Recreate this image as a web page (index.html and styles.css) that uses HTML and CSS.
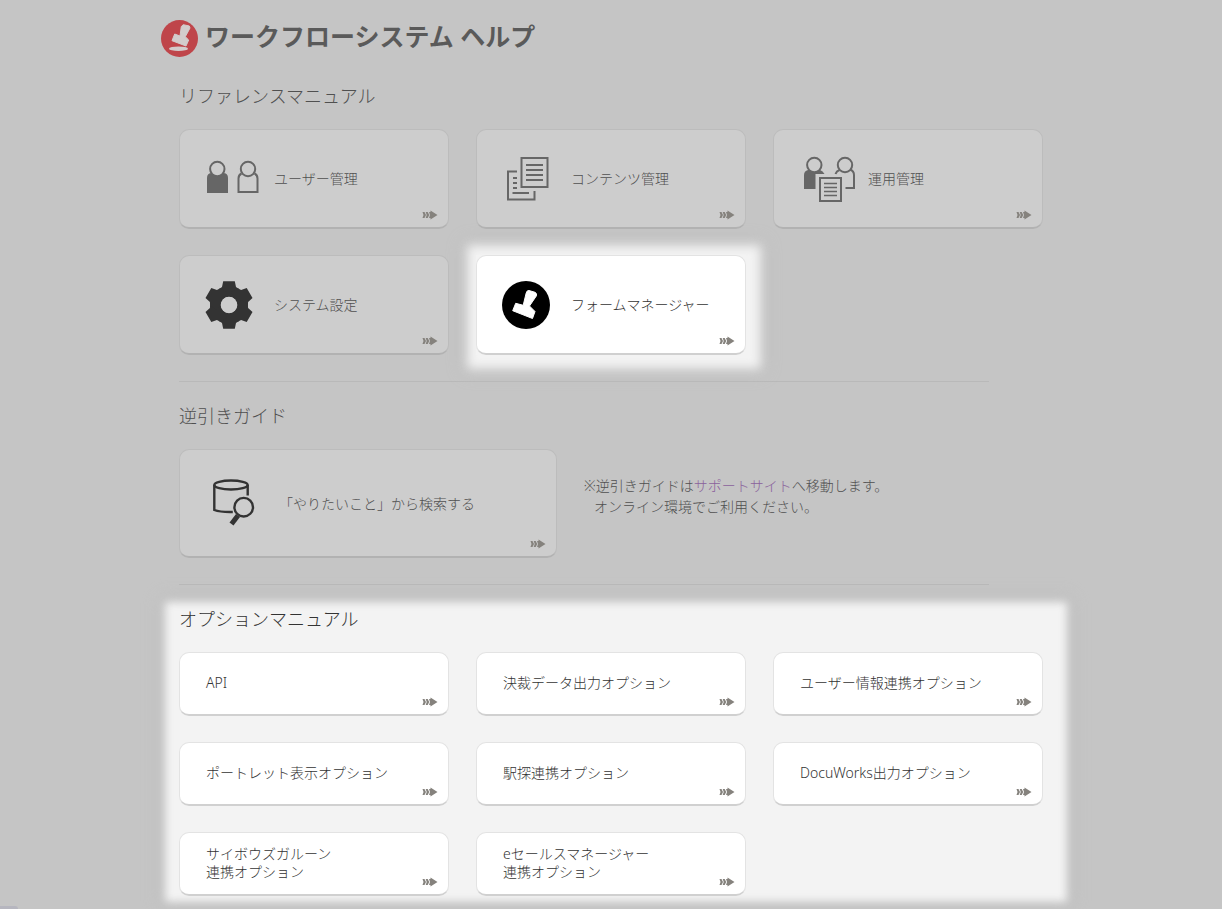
FILE: index.html
```html
<!DOCTYPE html>
<html lang="ja">
<head>
<meta charset="utf-8">
<meta name="viewport" content="width=device-width, initial-scale=1">
<title>ワークフローシステム ヘルプ</title>
<link rel="stylesheet" href="styles.css">
</head>
<body>
<svg class="defs" aria-hidden="true">
  <symbol id="arrow" viewBox="0 0 16 10">
    <path d="M0.500 2h2L4 5 2.500 8h-2l1-3zM3.700 2h2l1.500 3-1.500 3h-2l1-3zM7 2h1.500V0.500L15.500 5l-7 4.500V8H7l1-3z"/>
  </symbol>
</svg>
<main class="page">
  <header class="header">
    <svg class="logo" viewBox="0 0 37 37" aria-hidden="true">
      <circle cx="18.500" cy="18.500" r="18.500" fill="#bf454a"/>
      <path d="M20.300 6.500 22.300 4.700 28.300 6 29 8 24.300 16.700 27.700 20 25 26 11 20.700 13.700 14 19 16z" fill="#d3cccc" stroke="#d3cccc" stroke-linejoin="round"/>
      <ellipse cx="17.500" cy="28.700" rx="9.500" ry="2.300" fill="#d3cccc"/>
    </svg>
    <h1 class="title">ワークフローシステム ヘルプ</h1>
  </header>

  <section class="section">
    <h2 class="heading">リファレンスマニュアル</h2>
    <div class="grid">
      <a class="card" href="#user">
        <svg class="icon" viewBox="0 0 58 56" aria-hidden="true" fill="none" stroke="#666" stroke-width="2">
          <path d="M2 42V27q0-5 5-5h11q5 0 5 5v15z" fill="#666" stroke="none"/>
          <circle cx="12.300" cy="18" r="7.200" fill="#cdcdcd"/>
          <path d="M36.500 22.500q-3 1.500-3 5V41h19V27.500q0-3.500-3-5"/>
          <circle cx="43" cy="18" r="7.200"/>
        </svg>
        <span class="label">ユーザー管理</span>
        <svg class="arrow" aria-hidden="true"><use href="#arrow"/></svg>
      </a>
      <a class="card" href="#contents">
        <svg class="icon" viewBox="0 0 58 56" aria-hidden="true" fill="none" stroke="#666" stroke-width="2">
          <path d="M19.500 7h26v29h-26zM24 14h17M24 19h17M24 24h17M24 29h17M15 20.500H6v28h26.500V40M10.500 42H27M11 27h4M11 32h4M11 37h4"/>
        </svg>
        <span class="label">コンテンツ管理</span>
        <svg class="arrow" aria-hidden="true"><use href="#arrow"/></svg>
      </a>
      <a class="card" href="#operation">
        <svg class="icon" viewBox="0 0 58 56" aria-hidden="true" fill="none" stroke="#666" stroke-width="2">
          <path d="M5 38V24q0-4 4-5h12q3 1 4.500 4h-9v15z" fill="#666" stroke="none"/>
          <circle cx="15.300" cy="14" r="7.200" fill="#cdcdcd"/>
          <circle cx="46" cy="14" r="7.200"/>
          <path d="M36.500 23q1-3 4-4M51 18.500q4 1.500 4 5.500v13h-8.500M21 27h21v23H21z"/>
          <path d="M25 32.500h13M25 36.500h13M25 40.500h13M25 44.500h13" stroke-width="1.500"/>
        </svg>
        <span class="label">運用管理</span>
        <svg class="arrow" aria-hidden="true"><use href="#arrow"/></svg>
      </a>
      <a class="card" href="#system">
        <svg class="icon" viewBox="0 0 58 56" aria-hidden="true">
          <defs><path id="tooth" d="M-5.800-23.800H5.800L7-18 10-16V-8h-20v-8l3-2z"/></defs>
          <g fill="#333" transform="translate(24 28)">
            <circle r="13" fill="none" stroke="#333" stroke-width="10"/>
            <use href="#tooth"/>
            <use href="#tooth" transform="rotate(60)"/>
            <use href="#tooth" transform="rotate(120)"/>
            <use href="#tooth" transform="rotate(180)"/>
            <use href="#tooth" transform="rotate(240)"/>
            <use href="#tooth" transform="rotate(300)"/>
            <circle r="8.300" fill="#cdcdcd"/>
          </g>
        </svg>
        <span class="label">システム設定</span>
        <svg class="arrow" aria-hidden="true"><use href="#arrow"/></svg>
      </a>
      <div class="spotlight">
        <a class="card lit" href="#form">
          <svg class="icon" viewBox="0 0 58 56" aria-hidden="true">
            <circle cx="24" cy="28" r="24" fill="#000"/>
            <path d="M24.200 16Q25 13 27 13.500l6 1.800Q35.500 16.500 34.300 19l-6.800 10 5.500 5.500L30.500 41.500 10.700 33.700 13.700 26.300 21.200 28.300z" fill="#fff" stroke="#fff" stroke-linejoin="round"/>
          </svg>
          <span class="label">フォームマネージャー</span>
          <svg class="arrow" aria-hidden="true"><use href="#arrow"/></svg>
        </a>
      </div>
    </div>
  </section>

  <hr class="rule">

  <section class="section">
    <h2 class="heading">逆引きガイド</h2>
    <div class="guide">
      <a class="card card-wide" href="#guide">
        <svg class="icon" viewBox="0 0 58 56" aria-hidden="true" fill="none" stroke="#333" stroke-width="2.400">
          <ellipse cx="26" cy="9" rx="16.700" ry="4.500"/>
          <path d="M9.300 9v25q6 2.300 18.500 2M42.700 9v10.500"/>
          <circle cx="38.700" cy="31.200" r="9.300"/>
          <path d="M33 39.500 26.500 48" stroke-width="5"/>
        </svg>
        <span class="label">「やりたいこと」から検索する</span>
        <svg class="arrow" aria-hidden="true"><use href="#arrow"/></svg>
      </a>
      <p class="note">※逆引きガイドは<a class="link" href="#support">サポートサイト</a>へ移動します。<span class="note-line">オンライン環境でご利用ください。</span></p>
    </div>
  </section>

  <hr class="rule">

  <section class="section options">
    <h2 class="heading">オプションマニュアル</h2>
    <div class="grid">
      <a class="card card-small lit" href="#api"><span class="label">API</span><svg class="arrow" aria-hidden="true"><use href="#arrow"/></svg></a>
      <a class="card card-small lit" href="#decision"><span class="label">決裁データ出力オプション</span><svg class="arrow" aria-hidden="true"><use href="#arrow"/></svg></a>
      <a class="card card-small lit" href="#userinfo"><span class="label">ユーザー情報連携オプション</span><svg class="arrow" aria-hidden="true"><use href="#arrow"/></svg></a>
      <a class="card card-small lit" href="#portlet"><span class="label">ポートレット表示オプション</span><svg class="arrow" aria-hidden="true"><use href="#arrow"/></svg></a>
      <a class="card card-small lit" href="#ekitan"><span class="label">駅探連携オプション</span><svg class="arrow" aria-hidden="true"><use href="#arrow"/></svg></a>
      <a class="card card-small lit" href="#docuworks"><span class="label">DocuWorks出力オプション</span><svg class="arrow" aria-hidden="true"><use href="#arrow"/></svg></a>
      <a class="card card-small lit" href="#garoon"><span class="label">サイボウズガルーン<br>連携オプション</span><svg class="arrow" aria-hidden="true"><use href="#arrow"/></svg></a>
      <a class="card card-small lit" href="#esales"><span class="label">eセールスマネージャー<br>連携オプション</span><svg class="arrow" aria-hidden="true"><use href="#arrow"/></svg></a>
    </div>
  </section>
</main>
<div class="status"></div>
</body>
</html>
```
FILE: styles.css
```css
* {
  box-sizing: border-box;
}

body {
  min-height: 100vh;
  margin: 0;
  background: #c5c5c5;
  color: #505050;
  font: 300 14px/18px "Noto Sans", "Noto Sans CJK JP", sans-serif;
}

.defs {
  position: absolute;
  width: 0;
  height: 0;
}

.page {
  max-width: 900px;
  margin: 0 auto;
}

.header {
  display: flex;
  align-items: flex-start;
  gap: 7px;
  padding: 20px 0 26px;
}

.logo {
  width: 37px;
  height: 37px;
}

.title {
  margin: 0;
  color: #5a5a5a;
  font-size: 25px;
  line-height: 32px;
  font-weight: 700;
}

.section {
  padding: 0 18px;
}

.heading {
  margin: 0 0 20px;
  font-size: 18px;
  line-height: 26px;
  font-weight: 300;
}

.grid {
  display: grid;
  grid-template-columns: repeat(3, 1fr);
  gap: 26px 27px;
}

.card {
  position: relative;
  display: flex;
  align-items: center;
  gap: 11px;
  min-height: 100px;
  padding: 1px 10px 0 25px;
  border: 1px solid #bcbcbc;
  border-bottom: 2px solid #b2b2b2;
  border-radius: 10px;
  background: #cdcdcd;
  color: inherit;
  text-decoration: none;
}

.card-wide {
  flex: 0 1 378px;
  min-height: 109px;
  gap: 16px;
}

.card-small {
  min-height: 64px;
  padding: 0 26px 1px;
}

.lit {
  border-color: #e3e3e3;
  border-bottom-color: #d0d0d0;
  background: #fff;
  color: #333;
}

.label {
  white-space: nowrap;
}

.icon {
  flex: none;
  width: 58px;
  height: 56px;
}

.arrow {
  position: absolute;
  right: 10px;
  bottom: 7px;
  width: 16px;
  height: 10px;
  fill: #85827d;
}

.rule {
  width: 90%;
  height: 1px;
  margin: 26px 0 21px 18px;
  border: 0;
  background: #b9b9b9;
}

.guide {
  display: flex;
  align-items: flex-start;
  gap: 27px;
}

.note {
  margin: 26px 0 0;
  line-height: 21px;
}

.note-line {
  display: block;
  padding-left: 10px;
}

.link {
  color: #8a619c;
  text-decoration: none;
}

.spotlight {
  background: #f3f3f3;
  box-shadow: 3px 2px 10px 12px #f3f3f3, 3px 2px 16px 16px #bfbfbf;
}

.options {
  position: relative;
  isolation: isolate;
  color: #333;
}

/* soft-edged light area behind the option cards */
.options::before {
  content: "";
  position: absolute;
  z-index: -1;
  inset: -4px -6px -6px 4px;
  background: #f3f3f3;
  box-shadow: 0 0 12px 4px #bdbdbd;
  filter: blur(4px);
}

.status {
  position: fixed;
  left: 0;
  bottom: 0;
  width: 18px;
  height: 3px;
  border-top-right-radius: 3px;
  background: #b6b6bf;
}
```
